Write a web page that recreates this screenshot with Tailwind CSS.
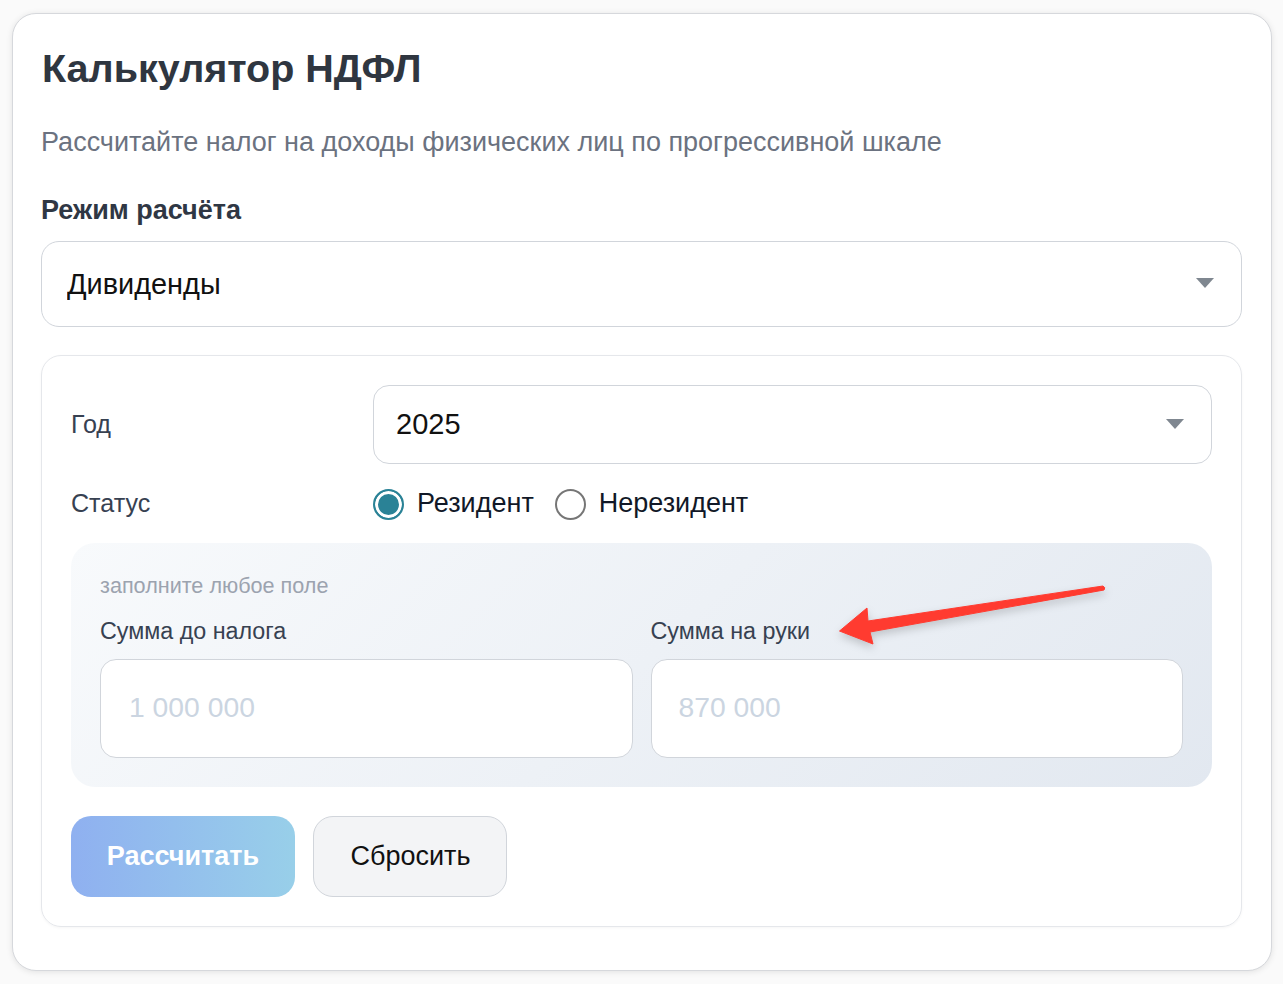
<!DOCTYPE html>
<html lang="ru">
<head>
    <meta charset="UTF-8">
    <title>Калькулятор НДФЛ</title>
    <script src="https://cdn.jsdelivr.net/npm/@tailwindcss/browser@4"></script>
</head>
<body class="bg-[#fafafa] font-['Liberation_Sans',Arial,sans-serif] h-[984px] overflow-hidden">

<div class="pt-[13px] pl-[12px] pr-[11px]">
    <div class="relative h-[958px] pl-[28px] pr-[29px] pt-[28px] bg-white border border-[#d6d8dc] rounded-[24px] shadow-[0_1px_6px_rgba(0,0,0,0.1)]">
        <h1 class="ml-px text-[39.5px] leading-[52px] font-bold text-[#2f3640]">Калькулятор НДФЛ</h1>
        <p class="mt-[32px] text-[27px] leading-[32px] text-[#6b7280]">Рассчитайте налог на доходы физических лиц по прогрессивной шкале</p>
        <label class="block mt-[36px] mb-[15px] text-[27px] leading-[32px] font-bold text-[#2f3744]">Режим расчёта</label>

        <!-- режим -->
        <div class="relative">
            <select class="appearance-none w-full h-[86px] pl-[25px] pt-[2px] bg-white border border-[#d1d5db] rounded-[18px] text-[28.9px] text-[#111]">
                <option>Дивиденды</option>
            </select>
            <svg class="absolute right-[28px] top-[37px]" width="18" height="10" viewBox="0 0 18 10"><path d="M0 0h18l-9 10z" fill="#7f8790"/></svg>
        </div>

        <div class="mt-[28px] h-[572px] p-[29px] border border-[#e5e7eb] rounded-[20px] shadow-[0_1px_3px_rgba(0,0,0,0.04)]">
            <!-- год -->
            <div class="flex items-center h-[79px]">
                <span class="w-[302px] text-[25.1px] text-[#374151]">Год</span>
                <div class="relative flex-1">
                    <select class="appearance-none w-full h-[79px] pl-[22px] bg-white border border-[#d1d5db] rounded-[16px] text-[29px] text-[#111]">
                        <option>2025</option>
                    </select>
                    <svg class="absolute right-[28px] top-[34px]" width="18" height="10" viewBox="0 0 18 10"><path d="M0 0h18l-9 10z" fill="#7f8790"/></svg>
                </div>
            </div>
            <!-- статус -->
            <div class="flex items-center mt-[20px] h-[40px]">
                <span class="w-[302px] text-[25.1px] text-[#374151]">Статус</span>
                <label class="flex items-center gap-[13px] text-[27px] text-[#111827]">
                    <input type="radio" name="status" checked class="appearance-none w-[31px] h-[31px] m-0 rounded-full border-2 border-[#767676] shadow-[inset_0_0_0_3px_white] checked:border-[#2a8296] checked:bg-[#2a8296]"><span class="pb-[2px]">Резидент</span>
                </label>
                <label class="flex items-center gap-[13px] ml-[21px] text-[27px] text-[#111827]">
                    <input type="radio" name="status" class="appearance-none w-[31px] h-[31px] m-0 rounded-full border-2 border-[#767676] shadow-[inset_0_0_0_3px_white] checked:border-[#2a8296] checked:bg-[#2a8296]"><span class="pb-[2px]">Нерезидент</span>
                </label>
            </div>
            <!-- суммы -->
            <div class="relative mt-[19px] h-[244px] px-[29px] pt-[29px] rounded-[24px] bg-[linear-gradient(135deg,#f8fafc,#e2e8f0)]">
                <p class="text-[21.6px] leading-[28px] text-[#9ca3af]">заполните любое поле</p>
                <div class="grid grid-cols-2 gap-[18px] mt-[16px]">
                    <div>
                        <label class="block mb-[13px] text-[23.3px] leading-[30px] text-[#374151]">Сумма до налога</label>
                        <input type="text" placeholder="1 000 000" class="w-full h-[99px] px-[28px] pb-[2px] bg-white border border-[#d1d5db] rounded-[16px] text-[28.3px] placeholder-[#cbd5e1]">
                    </div>
                    <div>
                        <label class="block mb-[13px] text-[23.3px] leading-[30px] text-[#374151]">Сумма на руки</label>
                        <input type="text" placeholder="870 000" class="w-full h-[99px] px-[27px] pb-[2px] bg-white border border-[#d1d5db] rounded-[16px] text-[28.3px] placeholder-[#cbd5e1]">
                    </div>
                </div>
                <!-- стрелка -->
                <svg class="absolute left-[768px] top-[42px] drop-shadow-[0_4px_4px_rgba(0,0,0,0.18)]" width="270" height="62" viewBox="0 0 270 62">
                    <path d="M0.5 46 L28 23 L29 36 L264 1 Q267 2.5 265 5 L31 47 L34 59 Z" fill="#ff3b30" stroke="#ff3b30" stroke-width="1" stroke-linejoin="round"/>
                </svg>
            </div>
            <!-- кнопки -->
            <div class="flex gap-[18px] mt-[29px]">
                <button class="w-[224px] h-[81px] rounded-[20px] bg-gradient-to-r from-[#8fb0f0] to-[#98cfe9] text-[27px] font-bold text-white">Рассчитать</button>
                <button class="w-[194px] h-[81px] pl-px rounded-[20px] bg-[#f3f4f6] border border-[#d1d5db] text-[27px] text-[#111]">Сбросить</button>
            </div>
        </div>
    </div>
</div>

</body>
</html>
